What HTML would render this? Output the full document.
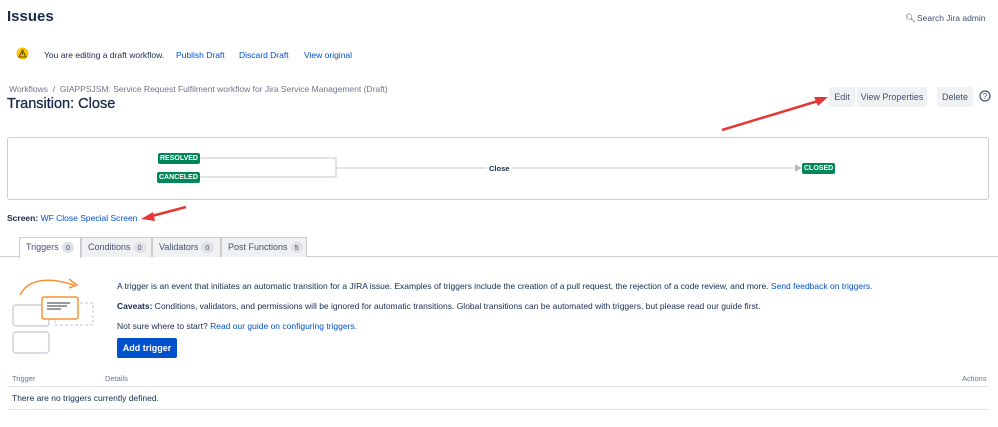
<!DOCTYPE html>
<html><head><meta charset="utf-8"><style>
*{margin:0;padding:0;box-sizing:border-box}
body{width:998px;height:427px;background:#fff;font-family:"Liberation Sans",sans-serif;color:#172b4d;position:relative;overflow:hidden;font-size:8.5px}
.a{position:absolute;white-space:nowrap}
.l{color:#0052cc}
.btn{position:absolute;background:#f0f1f3;border-radius:2px;color:#42526e;font-size:9px;text-align:center;line-height:20px;top:87px;height:20px}
.badge{position:absolute;background:#00875a;color:#fff;font-weight:bold;font-size:7px;line-height:11px;border-radius:2px;padding:0 2px}
.tab{position:absolute;top:237px;height:20px;background:#f0f1f3;border:1px solid #ccc;border-bottom:none;font-size:9px;line-height:19px;padding-left:6px;color:#42526e}
.cnt{display:inline-block;background:#dfe1e6;border-radius:7px;padding:0 4px;font-size:7.5px;line-height:11px;margin-left:3px}
</style></head><body>
<div class="a" style="left:7px;top:8px;font-size:15px;font-weight:bold;color:#172b4d">Issues</div>
<div class="a" style="left:905px;top:13px;font-size:8.5px;color:#42526e">&#128269;&#xFE0E;</div>
<div class="a" style="left:917px;top:13px;font-size:8.5px;color:#42526e">Search Jira admin</div>
<svg class="a" style="left:16px;top:47px" width="13" height="13"><circle cx="6.5" cy="6.5" r="6" fill="#ffc400"/><path d="M6.5 3L10 10H3Z" fill="none" stroke="#5e4a00" stroke-width="1"/><path d="M6.5 5.3v2.4" stroke="#5e4a00" stroke-width="1"/></svg>
<div class="a" style="left:44px;top:50px">You are editing a draft workflow.</div>
<div class="a l" style="left:176px;top:50px">Publish Draft</div>
<div class="a l" style="left:239px;top:50px">Discard Draft</div>
<div class="a l" style="left:304px;top:50px">View original</div>
<div class="a" style="left:9px;top:84px;color:#6b778c">Workflows &nbsp;/ &nbsp;GIAPPSJSM: Service Request Fulfilment workflow for Jira Service Management (Draft)</div>
<div class="a" style="left:7px;top:96px;font-size:14.5px;color:#172b4d;-webkit-text-stroke:0.3px #172b4d">Transition: Close</div>
<div class="btn" style="left:829px;width:26px">Edit</div>
<div class="btn" style="left:857px;width:70px">View Properties</div>
<div class="btn" style="left:937px;width:36px">Delete</div>
<svg class="a" style="left:979px;top:90px" width="12" height="12"><circle cx="6" cy="6" r="5" fill="none" stroke="#42526e" stroke-width="1.2"/><text x="6" y="9" font-size="8" text-anchor="middle" fill="#42526e" font-family="Liberation Sans">?</text></svg>
<div class="a" style="left:7px;top:137px;width:982px;height:63px;border:1px solid #ccc;border-radius:3px"></div>
<svg class="a" style="left:0;top:130px" width="998" height="70"><path d="M198 28H336V47H199M336 38H486M512 38H795" fill="none" stroke="#c8c8c8" stroke-width="1"/><path d="M795 34L802 38L795 42Z" fill="#bbb"/></svg>
<div class="badge" style="left:158px;top:153px">RESOLVED</div>
<div class="badge" style="left:157px;top:172px">CANCELED</div>
<div class="a" style="left:489px;top:164px;font-size:7.5px;font-weight:bold">Close</div>
<div class="badge" style="left:802px;top:163px">CLOSED</div>
<div class="a" style="left:7px;top:213px"><b>Screen:</b> <span class="l">WF Close Special Screen</span></div>
<div class="a" style="left:0;top:256px;width:998px;border-top:1px solid #ccc"></div>
<div class="tab" style="left:19px;width:62px;background:#fff;height:21px">Triggers<span class="cnt">0</span></div>
<div class="tab" style="left:81px;width:71px">Conditions<span class="cnt">0</span></div>
<div class="tab" style="left:152px;width:69px">Validators<span class="cnt">0</span></div>
<div class="tab" style="left:221px;width:86px">Post Functions<span class="cnt">5</span></div>
<svg class="a" style="left:10px;top:272px" width="90" height="85"><path d="M10 23Q22 0 64 13" fill="none" stroke="#f79232" stroke-width="1.5"/><path d="M59 7L67 13 59 16" fill="none" stroke="#f79232" stroke-width="1.5"/><rect x="3" y="33" width="36" height="21" rx="3" fill="#fff" stroke="#c1c7d0" stroke-width="1.2"/><rect x="3" y="60" width="36" height="21" rx="3" fill="#fff" stroke="#c1c7d0" stroke-width="1.2"/><rect x="45" y="31" width="38" height="22" fill="none" stroke="#c1c7d0" stroke-dasharray="3 2"/><rect x="32" y="25" width="36" height="22" rx="2" fill="#fff" stroke="#f79232" stroke-width="1.5"/><path d="M37 31H60M37 34H57M37 37H51" stroke="#333" stroke-width="1"/></svg>
<div class="a" style="left:117px;top:281px">A trigger is an event that initiates an automatic transition for a JIRA issue. Examples of triggers include the creation of a pull request, the rejection of a code review, and more. <span class="l">Send feedback on triggers.</span></div>
<div class="a" style="left:117px;top:301px"><b>Caveats:</b> Conditions, validators, and permissions will be ignored for automatic transitions. Global transitions can be automated with triggers, but please read our guide first.</div>
<div class="a" style="left:117px;top:321px">Not sure where to start? <span class="l">Read our guide on configuring triggers.</span></div>
<div class="a" style="left:117px;top:338px;width:60px;height:20px;background:#0052cc;border-radius:2px;color:#fff;font-weight:bold;font-size:9px;line-height:20px;text-align:center">Add trigger</div>
<div class="a" style="left:12px;top:374px;font-size:7.5px;color:#6b778c">Trigger</div>
<div class="a" style="left:105px;top:374px;font-size:7.5px;color:#6b778c">Details</div>
<div class="a" style="left:962px;top:374px;font-size:7.5px;color:#6b778c">Actions</div>
<div class="a" style="left:8px;top:386px;width:981px;border-top:1px solid #dfe1e6"></div>
<div class="a" style="left:12px;top:393px">There are no triggers currently defined.</div>
<div class="a" style="left:8px;top:409px;width:981px;border-top:1px solid #dfe1e6"></div>
<svg class="a" style="left:0;top:0" width="998" height="427"><path d="M722 130L818 101" stroke="#e53935" stroke-width="2.5"/><path d="M828 97L814 97L818 106Z" fill="#e53935"/><path d="M186 207L152 216" stroke="#e53935" stroke-width="2.5"/><path d="M141 219L153 212L155 221Z" fill="#e53935"/></svg>
</body></html>
